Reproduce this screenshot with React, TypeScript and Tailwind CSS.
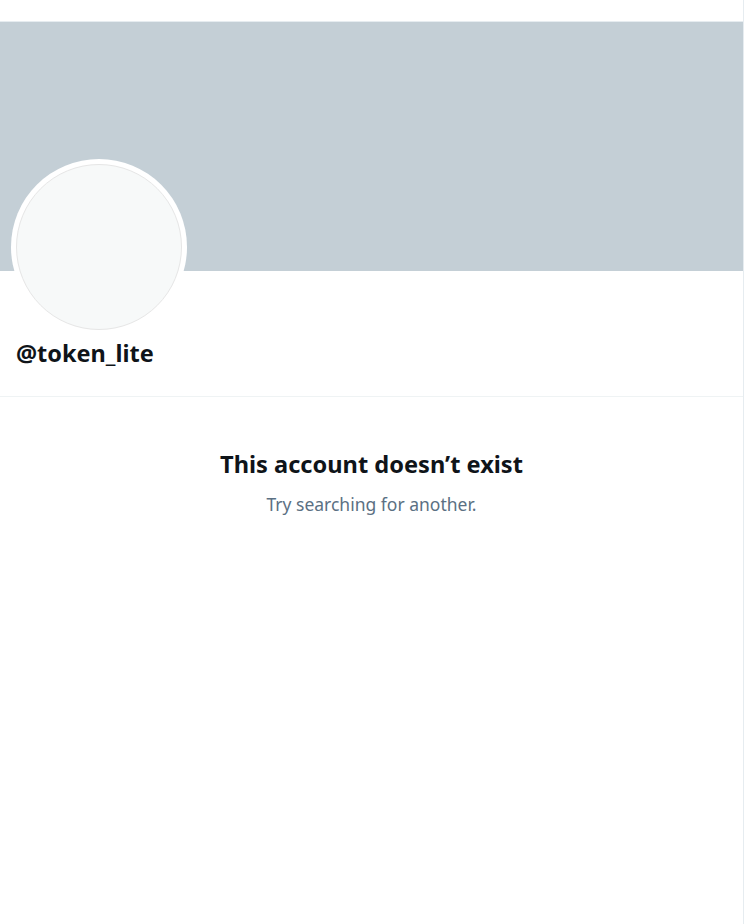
const font = { fontFamily: '"Noto Sans", "Liberation Sans", sans-serif' };

const ProfileHeader = () => {
    return (
        <div className="flex flex-col">
            <div className="h-[22px] bg-white border-b border-[#e6ecf0]"/>
            <div className="h-[249px] bg-[#c4cfd6]"/>
            <div className="flex flex-col px-[11px] h-[126px] border-b border-[#eff3f4]">
                <div className="-mt-[112px] w-[176px] h-[176px] rounded-full bg-white p-[5px]">
                    <div className="w-full h-full rounded-full bg-[#f7f9f9] border border-[#e6e6e6]"/>
                </div>
                <div className="pl-[5px] mt-[3px] text-[23.5px] leading-[30px] font-bold text-[#0f1419]">@token_lite</div>
            </div>
        </div>
    )
}

const EmptyState = () => {
    return (
        <div className="flex flex-col items-center pt-[51px]">
            <div className="text-[23.6px] leading-[32px] font-bold text-[#0f1419]">This account doesn’t exist</div>
            <div className="mt-[12px] text-[17.5px] leading-[24px] text-[#5b7083]">Try searching for another.</div>
        </div>
    )
}

export default function App() {
    return (
        <div className="w-[750px] h-[924px] bg-white flex overflow-hidden" style={font}>
            <div className="w-[744px] h-full border-r border-[#e6ecf0] flex flex-col">
                <ProfileHeader/>
                <EmptyState/>
            </div>
        </div>
    )
}
